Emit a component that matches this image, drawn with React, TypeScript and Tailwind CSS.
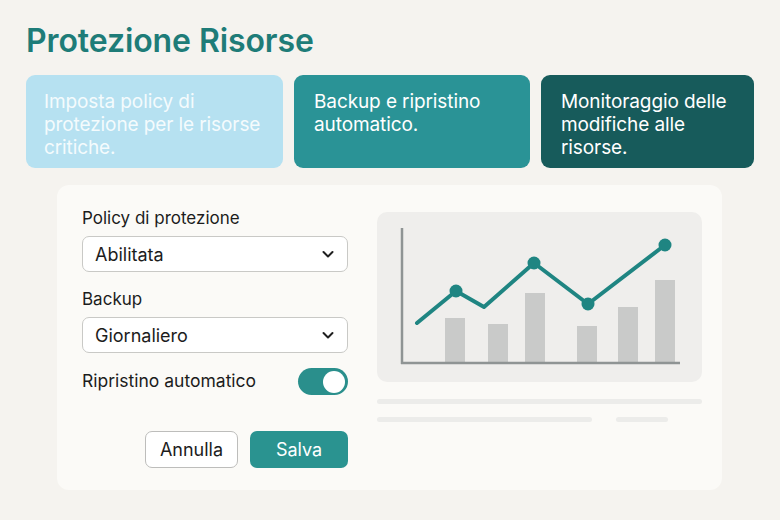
import { useState } from 'react'

const font = { fontFamily: 'Inter, "Noto Sans", sans-serif' }

function Chevron() {
    return (
        <svg width="14" height="14" viewBox="0 0 14 14" fill="none">
            <path d="M2.5 5 L7 9.5 L11.5 5" stroke="#1f1f1f" strokeWidth="2" strokeLinecap="round" strokeLinejoin="round" />
        </svg>
    )
}

function SelectBox({ value }: { value: string }) {
    return (
        <div className="h-[36px] w-[266px] rounded-[7px] border border-[#c9c9c6] bg-white flex items-center justify-between pl-[12px] pr-[12px] text-[18px] text-[#1c1c1c]">
            <span>{value}</span>
            <Chevron />
        </div>
    )
}

function Chart() {
    const bars = [
        { x: 68, top: 106 },
        { x: 111, top: 112 },
        { x: 148, top: 81 },
        { x: 200, top: 114 },
        { x: 241, top: 95 },
        { x: 278, top: 68 },
    ]
    const pts = [
        [40, 111],
        [79, 79],
        [107, 95],
        [157, 51],
        [211, 92],
        [288, 33],
    ]
    const dots = [pts[1], pts[3], pts[4], pts[5]]
    return (
        <svg width="325" height="170" viewBox="0 0 325 170">
            {bars.map((b, i) => (
                <rect key={i} x={b.x} y={b.top} width="20" height={151 - b.top} fill="#c9cac9" />
            ))}
            <line x1="25" y1="16" x2="25" y2="152" stroke="#8f9494" strokeWidth="2.5" />
            <line x1="24" y1="151" x2="303" y2="151" stroke="#8f9494" strokeWidth="2.5" />
            <polyline
                points={pts.map((p) => p.join(',')).join(' ')}
                fill="none"
                stroke="#1f8582"
                strokeWidth="4"
                strokeLinejoin="round"
                strokeLinecap="round"
            />
            {dots.map((d, i) => (
                <circle key={i} cx={d[0]} cy={d[1]} r="6.5" fill="#1f8582" />
            ))}
        </svg>
    )
}

export default function App() {
    const [on, setOn] = useState(true)

    return (
        <div className="w-[780px] h-[520px] bg-[#f5f3ef] overflow-hidden pl-[26px] pr-[26px] pt-[21px]" style={font}>
            <h1 className="text-[32px] font-semibold text-[#1e7c78] leading-[40px] tracking-[-0.1px]">Protezione Risorse</h1>

            {/* schede descrittive */}
            <div className="mt-[14px] flex gap-[11px]">
                <div className="w-[257px] h-[93px] rounded-[9px] bg-[#b6e1f1] pl-[18px] pr-[8px] pt-[15px] text-[19px] leading-[23px] tracking-[-0.1px] text-[#f4fbfd]">
                    Imposta policy di protezione per le risorse critiche.
                </div>
                <div className="w-[236px] h-[93px] rounded-[9px] bg-[#2a9396] pl-[20px] pr-[8px] pt-[15px] text-[19px] leading-[23px] tracking-[-0.1px] text-white">
                    Backup e ripristino automatico.
                </div>
                <div className="w-[213px] h-[93px] rounded-[9px] bg-[#175b5b] pl-[20px] pr-[8px] pt-[15px] text-[19px] leading-[23px] tracking-[-0.1px] text-white">
                    Monitoraggio delle modifiche alle risorse.
                </div>
            </div>

            {/* pannello principale */}
            <div className="mt-[17px] ml-[31px] w-[665px] h-[305px] rounded-[12px] bg-[#fbfaf7] flex pl-[25px] pt-[22px]">
                <div className="w-[266px] flex flex-col">
                    <div className="text-[17px] leading-[22px] text-[#1c1c1c]">Policy di protezione</div>
                    <div className="mt-[7px]">
                        <SelectBox value="Abilitata" />
                    </div>
                    <div className="mt-[16px] text-[17px] leading-[22px] text-[#1c1c1c]">Backup</div>
                    <div className="mt-[7px]">
                        <SelectBox value="Giornaliero" />
                    </div>
                    <div className="mt-[15px] flex items-center justify-between">
                        <span className="text-[17.5px] text-[#1c1c1c]">Ripristino automatico</span>
                        <button
                            onClick={() => setOn(!on)}
                            className={`w-[50px] h-[27px] rounded-full flex items-center px-[3px] ${on ? 'bg-[#2a8f8c] justify-end' : 'bg-[#cfcfcf] justify-start'}`}
                        >
                            <span className="w-[22px] h-[22px] rounded-full bg-white block" />
                        </button>
                    </div>
                    <div className="mt-[36px] flex justify-end gap-[12px]">
                        <button className="w-[93px] h-[37px] rounded-[7px] border border-[#bdbdbb] bg-white text-[18px] text-[#1c1c1c]">Annulla</button>
                        <button className="w-[98px] h-[37px] rounded-[7px] bg-[#2a9390] text-[18px] text-white">Salva</button>
                    </div>
                </div>

                <div className="ml-[29px] pt-[5px] flex flex-col">
                    <div className="w-[325px] h-[170px] rounded-[10px] bg-[#efeeec]">
                        <Chart />
                    </div>
                    <div className="mt-[17px] h-[5px] w-[325px] rounded-full bg-[#ececea]" />
                    <div className="mt-[13px] flex gap-[24px]">
                        <div className="h-[5px] w-[215px] rounded-full bg-[#ececea]" />
                        <div className="h-[5px] w-[52px] rounded-full bg-[#ececea]" />
                    </div>
                </div>
            </div>
        </div>
    )
}
